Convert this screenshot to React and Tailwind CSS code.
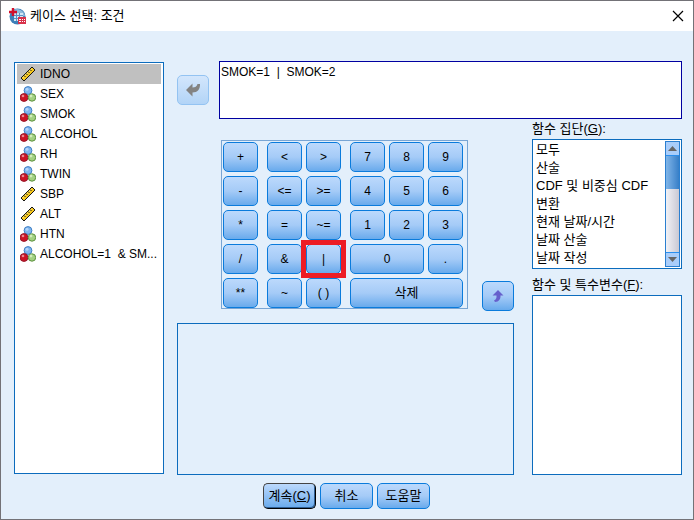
import React, { useState } from "react";

const variables = [
  { name: "IDNO", type: "scale" },
  { name: "SEX", type: "nominal" },
  { name: "SMOK", type: "nominal" },
  { name: "ALCOHOL", type: "nominal" },
  { name: "RH", type: "nominal" },
  { name: "TWIN", type: "nominal" },
  { name: "SBP", type: "scale" },
  { name: "ALT", type: "scale" },
  { name: "HTN", type: "nominal" },
  { name: "ALCOHOL=1  & SM...", type: "nominal" },
];

const functionGroups = [
  "모두",
  "산술",
  "CDF 및 비중심 CDF",
  "변환",
  "현재 날짜/시간",
  "날짜 산술",
  "날짜 작성",
];

const arithmeticKeys = ["+", "-", "*", "/", "**"];
const logicKeys = ["<", ">", "<=", ">=", "=", "~=", "&", "|", "~", "( )"];
const numberKeys = ["7", "8", "9", "4", "5", "6", "1", "2", "3", "0", "."];

const blueButton =
  "relative rounded-[5px] border border-[#0a7bdc] bg-linear-to-b from-[#bcd9fc] via-[#a5cbf7] to-[#68aaec] text-black";

const ScaleIcon = () => (
  <svg width="16" height="16" viewBox="0 0 16 16" className="shrink-0">
    <path d="M1 12 L12 1 L15 4 L4 15 Z" fill="#f8c81c" stroke="#151515" />
    <path d="M2.5 12 L12 2.5" stroke="#ffe878" />
    <path
      d="M4 9.5 L5.5 11 M6 7.5 L7.5 9 M8 5.5 L9.5 7 M10 3.5 L11.5 5"
      stroke="#151515"
    />
  </svg>
);

const NominalIcon = () => (
  <svg width="16" height="16" viewBox="0 0 16 16" className="shrink-0">
    <circle cx="8" cy="4.5" r="3.9" fill="#7fb5ee" stroke="#3f7fc4" />
    <circle cx="7" cy="3.2" r="1.5" fill="#b4d6fa" />
    <circle cx="4" cy="11.5" r="3.9" fill="#cc1426" stroke="#97182a" />
    <circle cx="3" cy="10" r="1.3" fill="#f08890" />
    <circle cx="12" cy="11.5" r="3.7" fill="#a3d182" stroke="#5c9140" />
    <circle cx="11" cy="10" r="1.4" fill="#d2edbd" />
  </svg>
);

const AppIcon = () => (
  <svg width="17" height="17" viewBox="0 0 17 17" className="shrink-0">
    <circle cx="8.5" cy="8.5" r="8" fill="#3d7fb8" />
    <path d="M3 3 A8 8 0 0 1 16 8 L8 9 Z" fill="#8fbbdc" />
    <path d="M5 5h9v8H5z" fill="#d5e6f4" />
    <path
      d="M5 7.5h9M5 10.5h9M7.5 5v8M10.5 5v8"
      stroke="#5a92c4"
      strokeWidth="1"
    />
    <path d="M4 0v8M0 4h8" stroke="#d3102b" strokeWidth="2.4" />
    <path d="M9 9h8v7H9z" fill="#d8314a" />
    <path
      d="M10 11.5h2M13 11.5h1M15 11.5h1M10 13.5h2M13 13.5h1M15 13.5h1"
      stroke="#fff"
    />
  </svg>
);

const Key = ({ label, onPress }) => (
  <button
    type="button"
    onClick={() => onPress(label)}
    className={
      label === "0"
        ? `${blueButton} col-span-2 h-[30px]`
        : `${blueButton} h-[30px]`
    }
  >
    {label}
    {label === "|" && (
      <span className="pointer-events-none absolute -inset-x-[6px] -inset-y-[5px] z-10 border-5 border-[#ed1c24]" />
    )}
  </button>
);

const App = () => {
  const [condition, setCondition] = useState("SMOK=1  |  SMOK=2");
  const [selected, setSelected] = useState("IDNO");

  const handleKey = (label) => {
    setCondition(condition + label);
  };

  return (
    <div className="flex min-h-screen flex-col border border-[#737277] bg-[#e3effb] font-['Liberation_Sans','Noto_Sans_CJK_KR',sans-serif] text-xs text-black">
      <header className="flex h-[30px] items-center bg-white pr-[9px] pl-2">
        <AppIcon />
        <h1 className="ml-1 flex-1 text-[13px]">케이스 선택: 조건</h1>
        <button type="button" aria-label="닫기">
          <svg width="12" height="12" viewBox="0 0 12 12">
            <path d="M1 1L11 11M11 1L1 11" stroke="#000" strokeWidth="1.2" />
          </svg>
        </button>
      </header>

      <main className="flex flex-1 pt-[30px] pr-[11px] pl-[13px]">
        <ul
          role="listbox"
          aria-label="변수"
          className="mt-px mb-px mr-[13px] w-[150px] border border-[#0c6cbd] bg-white px-[2px] py-px"
        >
          {variables.map((item) => (
            <li
              key={item.name}
              role="option"
              aria-selected={selected === item.name}
              onClick={() => setSelected(item.name)}
              className={
                selected === item.name
                  ? "flex h-5 items-center gap-1 bg-[#c0c0c0] pl-[3px] whitespace-pre"
                  : "flex h-5 items-center gap-1 pl-[3px] whitespace-pre"
              }
            >
              {item.type === "scale" ? <ScaleIcon /> : <NominalIcon />}
              {item.name}
            </li>
          ))}
        </ul>

        <div className="flex flex-1 flex-col">
          <div className="flex gap-[10px]">
            <button
              type="button"
              disabled
              aria-label="변수 빼기"
              className="mt-[14px] flex h-[30px] w-8 items-center justify-center rounded-[5px] border border-[#93c3f2] bg-linear-to-b from-[#d3e6fc] to-[#b2d4f7]"
            >
              <svg width="16" height="14" viewBox="0 0 16 14">
                <path
                  d="M1 7 L7.5 0.5 V4.5 C10 4.5 12 3.5 12.5 1 H15 C15.3 6 12.5 9.5 7.5 9.5 V13.5 Z"
                  fill="#838383"
                />
              </svg>
            </button>
            <textarea
              aria-label="조건식"
              value={condition}
              onChange={(e) => setCondition(e.target.value)}
              className="block h-[58px] flex-1 resize-none border border-[#0000a0] bg-white px-px py-[2px] outline-none"
            />
          </div>

          <div className="flex flex-1 gap-[18px]">
            <div className="flex flex-1 flex-col">
              <div className="mt-[21px] flex justify-end gap-[14px]">
                <div className="mb-[2px] flex gap-[9px] border border-[#78a5d4] pt-px pr-1 pl-px">
                  <div className="grid grid-cols-[35px] gap-1">
                    {arithmeticKeys.map((label) => (
                      <Key key={label} label={label} onPress={handleKey} />
                    ))}
                  </div>
                  <div className="grid grid-cols-[35px_35px] gap-1">
                    {logicKeys.map((label) => (
                      <Key key={label} label={label} onPress={handleKey} />
                    ))}
                  </div>
                  <div className="grid grid-cols-[35px_35px_35px] gap-1">
                    {numberKeys.map((label) => (
                      <Key key={label} label={label} onPress={handleKey} />
                    ))}
                    <button
                      type="button"
                      onClick={() => setCondition("")}
                      className={`${blueButton} col-span-3 h-[30px] text-[13px]`}
                    >
                      삭제
                    </button>
                  </div>
                </div>
                <button
                  type="button"
                  aria-label="함수 넣기"
                  className={`${blueButton} flex h-[30px] w-8 items-center justify-center self-end`}
                >
                  <svg width="12" height="14" viewBox="0 0 12 14">
                    <path
                      d="M6 1 L11.5 6.5 H8.5 C8.7 10 7 13 3 13 L2 11.5 C4.2 10.5 4.7 9 4.5 6.5 H0.5 Z"
                      fill="#6660cc"
                    />
                  </svg>
                </button>
              </div>
              <div className="mt-3 flex-1 border border-[#0c6cbd]" />
            </div>

            <div className="flex w-[150px] flex-col text-[13px]">
              <h2 id="groups" className="h-5 leading-5">
                함수 집단(<u>G</u>):
              </h2>
              <div className="flex h-[130px] border border-[#0c6cbd] bg-white p-px">
                <ul
                  role="listbox"
                  aria-labelledby="groups"
                  className="flex-1 overflow-hidden pl-[2px] leading-[18px]"
                >
                  {functionGroups.map((group) => (
                    <li
                      key={group}
                      role="option"
                      aria-selected="false"
                      className="whitespace-nowrap"
                    >
                      {group}
                    </li>
                  ))}
                </ul>
                <div className="flex w-[15px] flex-col border border-[#2b7fd0] bg-linear-to-r from-[#f2f2f6] to-[#c9c9d4]">
                  <button
                    type="button"
                    aria-label="위로"
                    className="flex h-[14px] items-center justify-center border-b border-[#2b8fee] bg-[#a9cdfa]"
                  >
                    <svg width="9" height="5" viewBox="0 0 9 5">
                      <path d="M0 5L4.5 0L9 5Z" fill="#666" />
                    </svg>
                  </button>
                  <div className="h-[33px] bg-linear-to-r from-[#80b5e8] to-[#367fc8]" />
                  <div className="flex-1" />
                  <button
                    type="button"
                    aria-label="아래로"
                    className="flex h-[14px] items-center justify-center border-t border-[#2b8fee] bg-[#a9cdfa]"
                  >
                    <svg width="9" height="5" viewBox="0 0 9 5">
                      <path d="M0 0L4.5 5L9 0Z" fill="#666" />
                    </svg>
                  </button>
                </div>
              </div>
              <h2 id="functions" className="mt-[6px] h-5 leading-5">
                함수 및 특수변수(<u>F</u>):
              </h2>
              <ul
                role="listbox"
                aria-labelledby="functions"
                className="flex-1 border border-[#0c6cbd] bg-white"
              />
            </div>
          </div>
        </div>
      </main>

      <footer className="mt-2 mb-[10px] flex justify-center gap-1 pr-px text-[13px]">
        <button
          type="button"
          className="h-[26px] w-[53px] rounded-[5px] border border-t-[#444] border-r-black border-b-black border-l-[#444] bg-linear-to-b from-[#bcd9fc] to-[#68aaec] shadow-[inset_-1px_-1px_0_#2f5f94]"
        >
          계속(<u>C</u>)
        </button>
        <button type="button" className={`${blueButton} h-[26px] w-[53px]`}>
          취소
        </button>
        <button type="button" className={`${blueButton} h-[26px] w-[53px]`}>
          도움말
        </button>
      </footer>
    </div>
  );
};

export default App;
